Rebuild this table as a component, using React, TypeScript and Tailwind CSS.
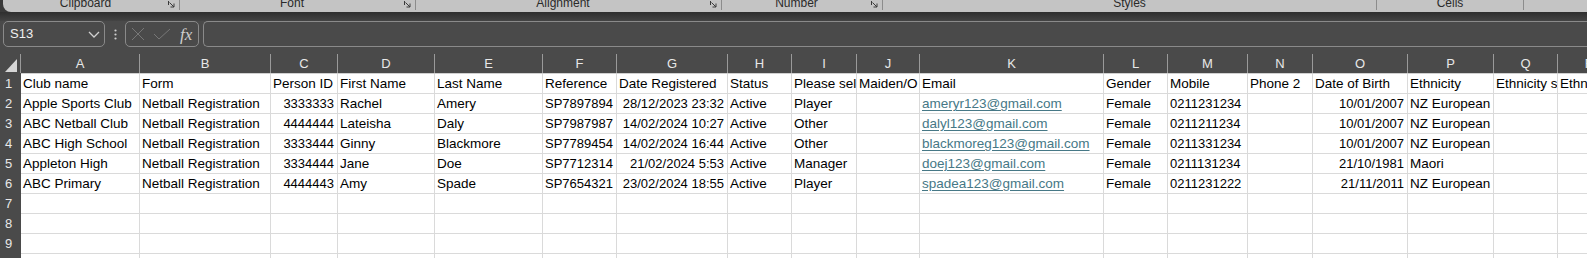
import React from "react";

type Col = { letter: string; w: string };

const cols: Col[] = [
  { letter: "A", w: "w-[119px]" },
  { letter: "B", w: "w-[131px]" },
  { letter: "C", w: "w-[67px]" },
  { letter: "D", w: "w-[97px]" },
  { letter: "E", w: "w-[108px]" },
  { letter: "F", w: "w-[74px]" },
  { letter: "G", w: "w-[111px]" },
  { letter: "H", w: "w-[64px]" },
  { letter: "I", w: "w-[65px]" },
  { letter: "J", w: "w-[63px]" },
  { letter: "K", w: "w-[184px]" },
  { letter: "L", w: "w-[64px]" },
  { letter: "M", w: "w-[80px]" },
  { letter: "N", w: "w-[65px]" },
  { letter: "O", w: "w-[95px]" },
  { letter: "P", w: "w-[86px]" },
  { letter: "Q", w: "w-[64px]" },
  { letter: "R", w: "w-[64px]" },
];

const rows: string[][] = [
  ["Club name", "Form", "Person ID", "First Name", "Last Name", "Reference", "Date Registered", "Status", "Please sel", "Maiden/O", "Email", "Gender", "Mobile", "Phone 2", "Date of Birth", "Ethnicity", "Ethnicity s", "Ethn"],
  ["Apple Sports Club", "Netball Registration", "3333333", "Rachel", "Amery", "SP7897894", "28/12/2023 23:32", "Active", "Player", "", "ameryr123@gmail.com", "Female", "0211231234", "", "10/01/2007", "NZ European", "", ""],
  ["ABC Netball Club", "Netball Registration", "4444444", "Lateisha", "Daly", "SP7987987", "14/02/2024 10:27", "Active", "Other", "", "dalyl123@gmail.com", "Female", "0211211234", "", "10/01/2007", "NZ European", "", ""],
  ["ABC High School", "Netball Registration", "3333444", "Ginny", "Blackmore", "SP7789454", "14/02/2024 16:44", "Active", "Other", "", "blackmoreg123@gmail.com", "Female", "0211331234", "", "10/01/2007", "NZ European", "", ""],
  ["Appleton High", "Netball Registration", "3334444", "Jane", "Doe", "SP7712314", "21/02/2024 5:53", "Active", "Manager", "", "doej123@gmail.com", "Female", "0211131234", "", "21/10/1981", "Maori", "", ""],
  ["ABC Primary", "Netball Registration", "4444443", "Amy", "Spade", "SP7654321", "23/02/2024 18:55", "Active", "Player", "", "spadea123@gmail.com", "Female", "0211231222", "", "21/11/2011", "NZ European", "", ""],
  [], [], [], [],
];

// columns holding numbers, drawn a touch smaller so digits fit like the original
const rightCols = [2, 6, 14];
const numCols = [2, 5, 6, 12, 14];

const groups = [
  { label: "Clipboard", w: "w-[177px]", launcher: true },
  { label: "Font", w: "w-[236px]", launcher: true },
  { label: "Alignment", w: "w-[306px]", launcher: true },
  { label: "Number", w: "w-[161px]", launcher: true },
  { label: "Styles", w: "w-[494px]", launcher: false },
  { label: "Cells", w: "w-[147px]", launcher: false },
];

function Launcher() {
  return (
    <svg width="7" height="7" viewBox="0 0 7 7" className="mr-[4px] mt-[1px] shrink-0">
      <path d="M0.5 0 V4 M1.5 1.5 L6 6 M6 2.5 V6 H2.5" stroke="#3a3a3a" strokeWidth="1" fill="none" />
    </svg>
  );
}

function Ribbon() {
  return (
    <div className="h-[12px] bg-[#3a3a3a] pl-[3px] flex">
      <div className="flex-1 flex bg-[#c4c4c4] rounded-bl-[8px] overflow-hidden">
        {groups.map((g) => (
          <div key={g.label} className={`${g.w} shrink-0 flex h-full`}>
            <div className="flex-1 text-center text-[12px] leading-[12px] -mt-[3px] text-[#2a2a2a]">{g.label}</div>
            {g.launcher && <Launcher />}
            <div className="w-px h-[10px] bg-[#8c8c8c]" />
          </div>
        ))}
        <div className="flex-1" />
      </div>
    </div>
  );
}

function FormulaBar() {
  return (
    <div className="h-[26px] flex pl-[3px]">
      <div className="w-[102px] shrink-0 border border-[#8a8a8a] rounded-[5px] flex items-center justify-between pl-[6px] pr-[4px]">
        <span className="text-[13px] text-[#f0f0f0]">S13</span>
        <svg width="12" height="7" viewBox="0 0 12 7">
          <path d="M1 1 L6 6 L11 1" stroke="#d0d0d0" strokeWidth="1.3" fill="none" />
        </svg>
      </div>
      <div className="w-[20px] shrink-0 flex items-center justify-center">
        <svg width="3" height="11" viewBox="0 0 3 11">
          <circle cx="1.5" cy="1.5" r="1.1" fill="#cfcfcf" />
          <circle cx="1.5" cy="5.5" r="1.1" fill="#cfcfcf" />
          <circle cx="1.5" cy="9.5" r="1.1" fill="#cfcfcf" />
        </svg>
      </div>
      <div className="w-[74px] shrink-0 border border-[#8a8a8a] rounded-[5px] flex items-center pl-[5px]">
        <svg width="14" height="14" viewBox="0 0 14 14">
          <path d="M1 1 L13 13 M13 1 L1 13" stroke="#777777" strokeWidth="1" fill="none" />
        </svg>
        <svg width="18" height="12" viewBox="0 0 18 12" className="ml-[8px]">
          <path d="M1 6 L6 11 L17 1" stroke="#777777" strokeWidth="1" fill="none" />
        </svg>
        <span className="ml-[9px] font-['Liberation_Serif',serif] italic text-[17px] leading-none text-[#cfcfcf]">fx</span>
      </div>
      <div className="ml-[4px] flex-1 border border-r-0 border-[#8a8a8a] rounded-l-[5px]" />
    </div>
  );
}

function ColumnHeaders() {
  return (
    <div className="h-[26px] pt-[7px] flex">
      <div className="w-[21px] shrink-0 h-[19px] border-r border-[#9a9a9a] flex items-end pl-[5px] pb-[1px]">
        <svg width="12" height="13" viewBox="0 0 12 13">
          <polygon points="12,0 12,13 0,13" fill="#d6d6d6" />
        </svg>
      </div>
      {cols.map((c) => (
        <div key={c.letter} className={`${c.w} shrink-0 h-[19px] border-r border-[#9a9a9a] flex items-center justify-center text-[13px] text-[#e8e8e8]`}>
          {c.letter}
        </div>
      ))}
    </div>
  );
}

function Row({ n, data }: { n: number; data: string[] }) {
  return (
    <div className="flex h-[20px]">
      <div className="w-[21px] shrink-0 bg-[#4a4a4a] pl-[5px] text-[13px] leading-[20px] text-[#e8e8e8]">{n}</div>
      {cols.map((c, i) => {
        const text = data[i] ?? "";
        const right = n > 1 && rightCols.includes(i);
        const num = n > 1 && numCols.includes(i);
        const link = n > 1 && i === 10 && text !== "";
        return (
          <div
            key={c.letter}
            className={`${c.w} shrink-0 h-[20px] bg-white border-r border-b border-[#dadada] overflow-hidden whitespace-nowrap pl-[2px] pr-[3px] leading-[19px] text-black ${right ? "text-right" : "text-left"} ${num ? "text-[13px]" : "text-[13.5px]"}`}
          >
            {link ? <span className="text-[#467886] underline underline-offset-[2px]">{text}</span> : text}
          </div>
        );
      })}
    </div>
  );
}

export default function App() {
  return (
    <div className="w-[1587px] h-[258px] overflow-hidden bg-[#4a4a4a] font-['Liberation_Sans',Arial,sans-serif]">
      <Ribbon />
      <div className="h-[9px] bg-gradient-to-b from-[#2f2f2f] to-[#444444]" />
      <FormulaBar />
      <ColumnHeaders />
      <div className="flex h-px">
        <div className="w-[21px] bg-[#4a4a4a]" />
        <div className="flex-1 bg-[#d0d0d0]" />
      </div>
      <div>
        {rows.map((r, i) => (
          <Row key={i} n={i + 1} data={r} />
        ))}
      </div>
    </div>
  );
}
